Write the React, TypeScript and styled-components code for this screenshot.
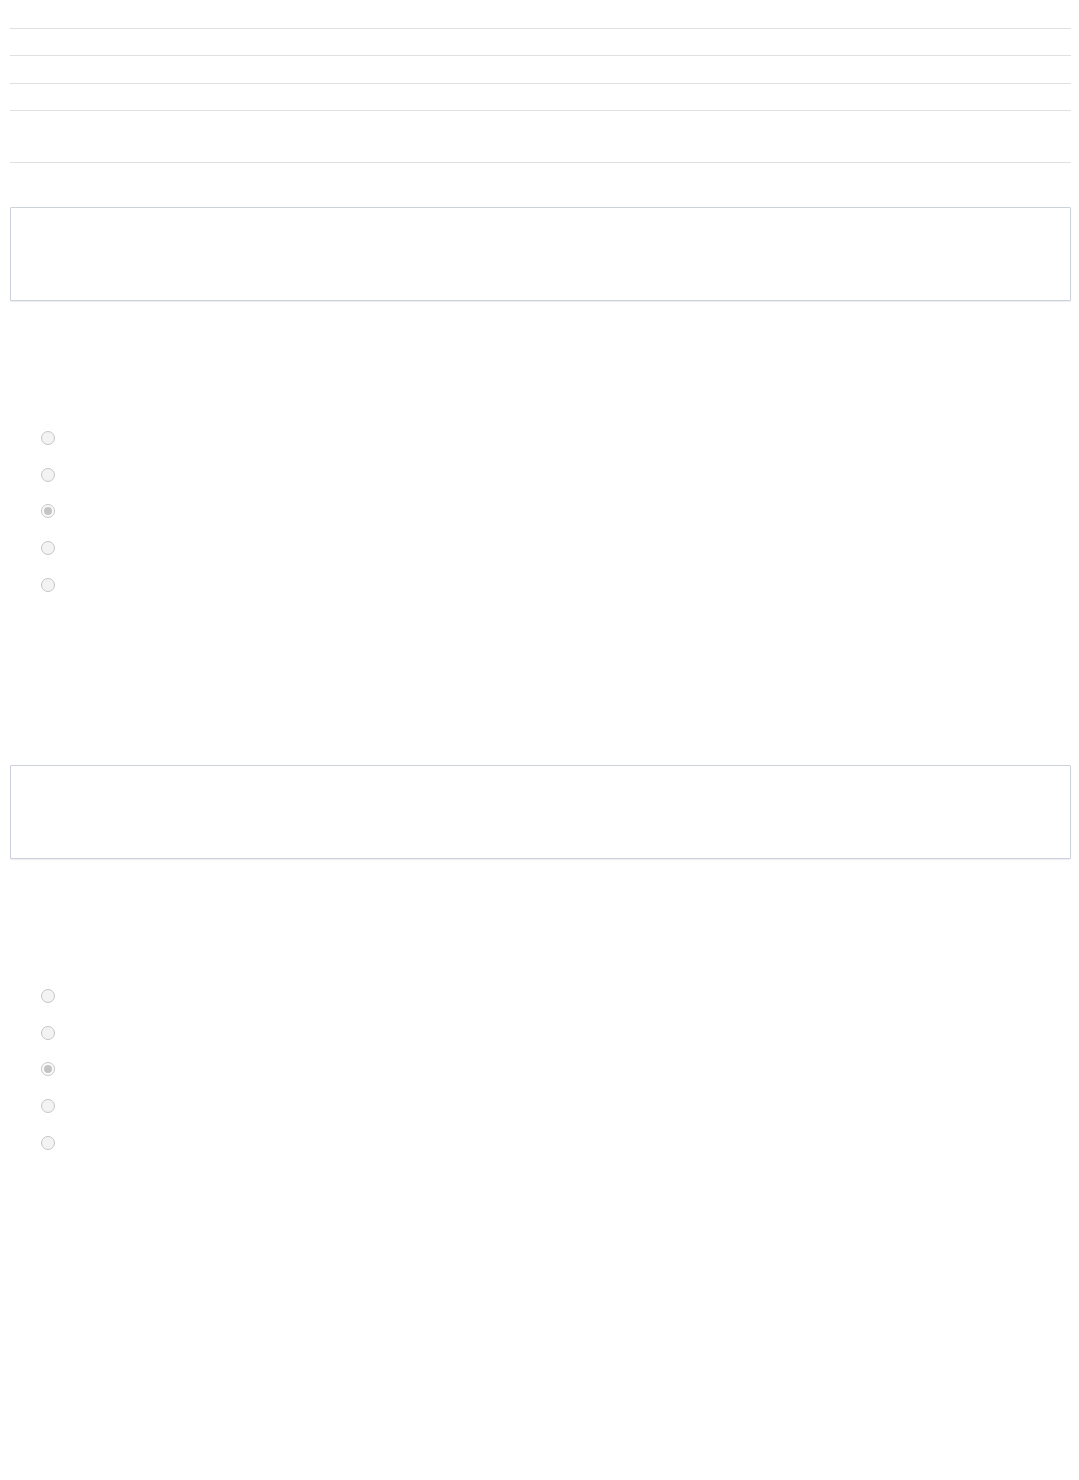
import { createGlobalStyle, styled } from 'styled-components';

const GlobalStyle = createGlobalStyle`
  html, body {
    margin: 0;
    padding: 0;
    background: #ffffff;
    font-family: 'Liberation Sans', Arial, sans-serif;
  }
  * {
    box-sizing: border-box;
  }
`;

const rows = [27, 28, 27, 52, 1];

const choices = [false, false, true, false, false];

export default function App() {
  return (
    <>
      <GlobalStyle />
      <Page>
        <RuleList>
          {rows.map((h, i) => (
            <Rule key={i} $height={h} />
          ))}
        </RuleList>
        <Form>
          {[0, 1].map((s) => (
            <Section key={s}>
              <Answer aria-label={`answer-${s}`} readOnly />
              <RadioList>
                {choices.map((checked, i) => (
                  <RadioRow key={i}>
                    <Radio $checked={checked} />
                  </RadioRow>
                ))}
              </RadioList>
            </Section>
          ))}
        </Form>
      </Page>
    </>
  );
}

const Page = styled.div`
  width: 1079px;
  min-height: 1480px;
  padding: 28px 8px 0 10px;
`;

const RuleList = styled.div`
  display: flex;
  flex-direction: column;
`;

const Rule = styled.div<{ $height: number }>`
  height: ${(p) => p.$height}px;
  border-top: 1px solid #e0e0e2;
`;

const Form = styled.div`
  display: flex;
  flex-direction: column;
  padding-top: 44px;
`;

const Section = styled.div`
  display: flex;
  flex-direction: column;
  height: 558px;
`;

const Answer = styled.textarea`
  display: block;
  width: 1061px;
  height: 94px;
  margin: 0;
  border: 1px solid #cdd1da;
  border-radius: 1px;
  background: #ffffff;
  resize: none;
  outline: none;
  box-shadow: 0 1px 1px rgba(200, 205, 215, 0.35);
`;

const RadioList = styled.div`
  display: flex;
  flex-direction: column;
  margin-top: 118.5px;
  padding-left: 31px;
`;

const RadioRow = styled.div`
  height: 36.75px;
  display: flex;
  align-items: center;
`;

const Radio = styled.span<{ $checked: boolean }>`
  position: relative;
  width: 14px;
  height: 14px;
  border-radius: 50%;
  border: 1px solid #c6c6c6;
  background: ${(p) => (p.$checked ? '#fbfbfb' : '#f3f3f3')};

  &::after {
    content: '';
    display: ${(p) => (p.$checked ? 'block' : 'none')};
    position: absolute;
    left: 2px;
    top: 2px;
    width: 8px;
    height: 8px;
    border-radius: 50%;
    background: #c4c4c4;
  }
`;
